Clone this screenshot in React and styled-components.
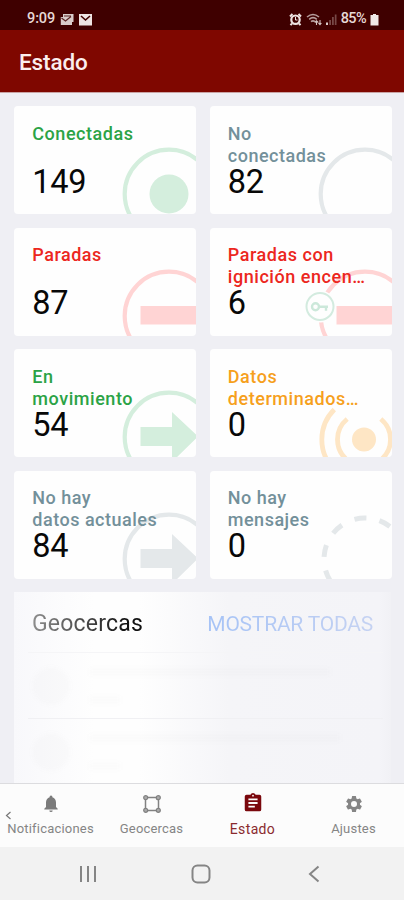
import React from "react";
import styled, { createGlobalStyle } from "styled-components";

const GlobalStyle = createGlobalStyle`
  * { box-sizing: border-box; }
  body { margin: 0; background: #efeff4; font-family: Roboto, "Liberation Sans", sans-serif; }
`;

const Screen = styled.div`
  width: 404px;
  height: 900px;
  display: flex;
  flex-direction: column;
  overflow: hidden;
  background: #efeff4;
`;

const StatusBar = styled.div`
  flex: none;
  height: 30px;
  display: flex;
  justify-content: space-between;
  padding: 8px 25px 0 27px;
  background: #3f0000;
  color: #e6d8d6;
`;

const StatusGroup = styled.div`
  display: flex;
  align-items: center;
  height: 22px;
  gap: ${(p) => p.$gap}px;
`;

const StatusText = styled.span`
  font-size: 14.5px;
  line-height: 22px;
  font-weight: 500;
  letter-spacing: ${(p) => p.$spacing || 0}px;
`;

const Header = styled.header`
  flex: none;
  height: 63px;
  display: flex;
  align-items: center;
  padding: 2px 19px 0;
  background: #7f0700;
  border-bottom: 1px solid #c9a3a4;
`;

const Title = styled.h1`
  margin: 0;
  color: #fbeeee;
  font-size: 22.5px;
  line-height: 28px;
  font-weight: 500;
  letter-spacing: -0.1px;
`;

const Content = styled.main`
  flex: 1;
  min-height: 0;
  padding: 13px 13px 0 14px;
  overflow: hidden;
`;

const Grid = styled.div`
  display: grid;
  grid-template-columns: 182px 182px;
  grid-auto-rows: 108px;
  gap: 13.5px;
`;

const Card = styled.section`
  position: relative;
  overflow: hidden;
  padding: 16.5px 0 0 18.3px;
  border-radius: 4px;
  background: #fefefe;
`;

const CardArt = styled.svg`
  position: absolute;
  inset: 0;
  color: ${(p) => p.$tone};
`;

const CardTitle = styled.div`
  position: relative;
  height: 44px;
  color: ${(p) => p.$color};
  font-size: 18px;
  line-height: 22px;
  font-weight: 480;
  letter-spacing: ${(p) => p.$spacing}px;
  white-space: pre;
`;

const CardValue = styled.div`
  position: relative;
  color: #080808;
  font-size: 32.5px;
  line-height: 30px;
  font-weight: 370;
  letter-spacing: -0.3px;
`;

const Geofences = styled.section`
  height: 191px;
  margin-top: 13.5px;
  background: linear-gradient(90deg, #f8f8fb 0, #fefefe 80px, #fefefe 125px, #f5f5f8 215px, #f4f4f8 365px, #f1f1f5 377px);
`;

const GeoHeader = styled.div`
  display: flex;
  align-items: center;
  justify-content: space-between;
  height: 60px;
  padding: 3px 18px 0 18px;
`;

const GeoTitle = styled.h2`
  margin: 0;
  font-size: 23px;
  font-weight: 370;
  letter-spacing: 0.2px;
  color: transparent;
  background: linear-gradient(90deg, #8e8e8e, #111 85%);
  background-clip: text;
`;

const ShowAll = styled.a`
  font-size: 21px;
  font-weight: 370;
  letter-spacing: -0.22px;
  color: transparent;
  background: linear-gradient(90deg, #a6c3f6, #c5d2f2);
  background-clip: text;
`;

const GeoRow = styled.div`
  display: flex;
  align-items: center;
  gap: 20px;
  height: 66px;
  margin: 0 8px 0 14px;
  padding-left: 4px;
  border-top: 1px solid ${(p) => p.$line};
`;

const Avatar = styled.div`
  width: 38px;
  height: 38px;
  border-radius: 50%;
  background: rgba(120, 120, 120, 0.025);
  filter: blur(2px);
`;

const Lines = styled.div`
  display: flex;
  flex-direction: column;
  gap: 20px;
`;

const Line = styled.div`
  width: ${(p) => p.$width}px;
  height: 8px;
  background: rgba(120, 120, 120, 0.02);
  filter: blur(2px);
`;

const TabBar = styled.nav`
  flex: none;
  position: relative;
  display: grid;
  grid-template-columns: repeat(4, 101px);
  height: 64px;
  background: #fcfcfc;
  border-top: 1px solid #dcdcdf;
`;

const Tab = styled.div`
  display: flex;
  flex-direction: column;
  align-items: center;
  padding-top: ${(p) => (p.$active ? 8 : 10)}px;
  color: ${(p) => (p.$active ? "#8a2a2e" : "#858585")};
`;

const TabLabel = styled.span`
  margin-top: 6px;
  font-size: ${(p) => p.$size || 13}px;
  line-height: 18px;
  letter-spacing: ${(p) => p.$spacing}px;
  white-space: nowrap;
`;

const ScrollHint = styled.svg`
  position: absolute;
  left: 4px;
  top: 26px;
`;

const SystemNav = styled.div`
  flex: none;
  display: grid;
  grid-template-columns: 175px 51px 175px;
  align-items: center;
  justify-items: center;
  height: 53px;
  background: #f2f2f2;
`;

const Ring = () => <circle cx="155" cy="88" r="44.3" fill="none" stroke="currentColor" strokeWidth="4.2" />;
const Arrow = () => <path d="M126.5 78h31.5v-15l26 24.5-26 25.5v-16h-31.5z" fill="currentColor" />;
const Bar = () => <path d="M126.5 78h60v18.5h-60z" fill="currentColor" />;

const art = {
  dot: <><Ring /><circle cx="155" cy="88" r="19.5" fill="currentColor" /></>,
  ring: <Ring />,
  bar: <><Ring /><Bar /></>,
  key: (
    <>
      <Ring /><Bar />
      <circle cx="110" cy="78.5" r="16" fill="#fefefe" />
      <circle cx="110" cy="78.5" r="13.5" fill="none" stroke="#d3ebdf" strokeWidth="2" />
      <g fill="none" stroke="#cce8da" strokeWidth="2.4">
        <circle cx="105.5" cy="78.8" r="3.5" />
        <path d="M109 78.8h9M116 78.8v4" />
      </g>
    </>
  ),
  arrow: <><Ring /><Arrow /></>,
  signal: (
    <g fill="none" stroke="currentColor" strokeWidth="4.8">
      <circle cx="154" cy="90.5" r="12" fill="currentColor" stroke="none" />
      <path d="M124.3 60.5A42.3 42.3 0 0 0 124.3 120.5M183.7 60.5A42.3 42.3 0 0 1 183.7 120.5" />
      <path d="M137.2 70A26.5 26.5 0 0 0 137.2 111M170.8 70A26.5 26.5 0 0 1 170.8 111" />
    </g>
  ),
  dashed: (
    <circle cx="155" cy="88" r="41" fill="none" stroke="currentColor" strokeWidth="5"
      strokeDasharray="12 13.76" transform="rotate(-69.4 155 88)" />
  ),
};

const cards = [
  { title: "Conectadas", value: 149, color: "#2ba346", tone: "#d4eedd", icon: "dot", spacing: 0.55 },
  { title: "No\nconectadas", value: 82, color: "#73909a", tone: "#e4e8ea", icon: "ring", spacing: 0.5 },
  { title: "Paradas", value: 87, color: "#ec2620", tone: "#ffd4d4", icon: "bar", spacing: 0.5 },
  { title: "Paradas con\nignición encen…", value: 6, color: "#ec2620", tone: "#ffd4d4", icon: "key", spacing: 0.55 },
  { title: "En\nmovimiento", value: 54, color: "#2ba346", tone: "#d4eedd", icon: "arrow", spacing: 0.55 },
  { title: "Datos\ndeterminados…", value: 0, color: "#f6a01c", tone: "#fee6c5", icon: "signal", spacing: 0.55 },
  { title: "No hay\ndatos actuales", value: 84, color: "#73909a", tone: "#e4e8ea", icon: "arrow", spacing: 0.5 },
  { title: "No hay\nmensajes", value: 0, color: "#73909a", tone: "#e4e8ea", icon: "dashed", spacing: 0.5 },
];

const MailStack = () => (
  <svg width="14" height="13" viewBox="0 0 14 13">
    <path d="M3 1h10.5v8H12v3H.8V4H3z" fill="#d9cccb" />
    <path d="M1.5 5l4 3 5.5-4.5M4 3h7" stroke="#5b2525" fill="none" strokeWidth="1.2" />
  </svg>
);
const Mail = () => (
  <svg width="13" height="13" viewBox="0 0 13 13">
    <path d="M0 1h13v11.5H0z" fill="#eee4e3" />
    <path d="M2 3l4.5 4L11 3" stroke="#3f0000" fill="none" strokeWidth="1.6" />
  </svg>
);
const Alarm = () => (
  <svg width="13" height="13" viewBox="0 0 13 13">
    <path d="M1 3.5L3.5 1M12 3.5L9.5 1M3 10.5l-1.5 1.7M10 10.5l1.5 1.7" stroke="#eee4e3" strokeWidth="2" />
    <circle cx="6.5" cy="6.7" r="4.2" fill="#3f0000" stroke="#eee4e3" strokeWidth="2.2" />
    <path d="M6.5 4v3h2" stroke="#eee4e3" fill="none" />
  </svg>
);
const Wifi = () => (
  <svg width="16" height="13" viewBox="0 0 16 13">
    <path d="M1 4q6-5 12 0M3.2 6.3q3.8-3.2 7.6 0M5 8.7q2-1.7 4 0" fill="none" stroke="#b69d9c" strokeWidth="1.6" />
    <path d="M10.5 12V8M8.8 9.5l1.7-1.8 1.7 1.8M14 7v4.5M12.5 10l1.5 1.6 1.4-1.6" fill="none" stroke="#d4c4c3" strokeWidth="1.1" />
  </svg>
);
const Signal = () => (
  <svg width="11" height="13" viewBox="0 0 11 13">
    <path d="M0 12V9.5h2V12z" fill="#d9cccb" />
    <path d="M3.2 12V7h1.8v5zM6 12V4h1.8v8zM8.8 12V1.5h1.7V12z" fill="#774847" />
  </svg>
);
const Battery = () => (
  <svg width="9" height="13" viewBox="0 0 9 13">
    <path d="M3 1h3v1h2.5v10.5h-8V2H3z" fill="#f1e8e7" />
  </svg>
);

const Bell = () => (
  <svg width="18" height="20" viewBox="0 0 18 20">
    <path d="M9 1.5a1.5 1.5 0 0 0-1.4 1.7C5.3 3.9 4 5.9 4 8.4V13l-1.7 1.7v.8h13.4v-.8L14 13V8.4c0-2.5-1.3-4.5-3.6-5.2A1.5 1.5 0 0 0 9 1.5zM7.3 16.4a1.7 1.5 0 0 0 3.4 0z" fill="#7b7b7b" />
  </svg>
);
const Fence = () => (
  <svg width="20" height="20" viewBox="0 0 20 20" fill="none" stroke="#818181" strokeWidth="1.5">
    <path d="M3.5 3.5h13v13h-13z" />
    <g fill="#aaa" strokeWidth="1.2">
      <circle cx="3.7" cy="3.7" r="2" /><circle cx="16.3" cy="3.7" r="2" />
      <circle cx="3.7" cy="16.3" r="2" /><circle cx="16.3" cy="16.3" r="2" />
    </g>
  </svg>
);
const Clipboard = () => (
  <svg width="22" height="22" viewBox="0 0 24 24">
    <path d="M19 3h-4.2a3 3 0 0 0-5.6 0H5a2 2 0 0 0-2 2v14a2 2 0 0 0 2 2h14a2 2 0 0 0 2-2V5a2 2 0 0 0-2-2zm-7 0a1 1 0 1 1 0 2 1 1 0 0 1 0-2zm2 14H7v-2h7v2zm3-4H7v-2h10v2zm0-4H7V7h10v2z" fill="#7a080d" />
  </svg>
);
const Gear = () => (
  <svg width="20" height="20" viewBox="0 0 24 24">
    <path d="M19.14 12.94c.04-.3.06-.61.06-.94s-.02-.64-.07-.94l2.03-1.58a.5.5 0 0 0 .12-.61l-1.92-3.32a.5.5 0 0 0-.59-.22l-2.39.96a7 7 0 0 0-1.62-.94l-.36-2.54a.5.5 0 0 0-.48-.41h-3.84a.5.5 0 0 0-.47.41l-.36 2.54a7 7 0 0 0-1.62.94l-2.39-.96a.5.5 0 0 0-.59.22L2.74 8.87a.5.5 0 0 0 .12.61l2.03 1.58a6 6 0 0 0 0 1.88l-2.03 1.58a.5.5 0 0 0-.12.61l1.92 3.32c.12.22.37.29.59.22l2.39-.96c.5.38 1.03.7 1.62.94l.36 2.54c.05.24.24.41.48.41h3.84c.24 0 .44-.17.47-.41l.36-2.54a7 7 0 0 0 1.62-.94l2.39.96c.22.08.47 0 .59-.22l1.92-3.32a.5.5 0 0 0-.12-.61zM12 15.6a3.6 3.6 0 1 1 0-7.2 3.6 3.6 0 0 1 0 7.2z" fill="#858585" />
  </svg>
);

const tabs = [
  { label: "Notificaciones", icon: <Bell />, spacing: 0.2 },
  { label: "Geocercas", icon: <Fence />, spacing: 0.2 },
  { label: "Estado", icon: <Clipboard />, active: true, size: 14, spacing: 0.35 },
  { label: "Ajustes", icon: <Gear />, spacing: 0.2 },
];

export default function App() {
  return (
    <Screen>
      <GlobalStyle />
      <StatusBar>
        <StatusGroup $gap={5}>
          <StatusText $spacing={-0.1}>9:09</StatusText>
          <MailStack />
          <Mail />
        </StatusGroup>
        <StatusGroup $gap={4}>
          <Alarm />
          <Wifi />
          <Signal />
          <StatusText $spacing={-0.6}>85%</StatusText>
          <Battery />
        </StatusGroup>
      </StatusBar>
      <Header><Title>Estado</Title></Header>
      <Content>
        <Grid>
          {cards.map((c) => (
            <Card key={c.title}>
              <CardArt $tone={c.tone} width="182" height="108" viewBox="0 0 182 108">{art[c.icon]}</CardArt>
              <CardTitle $color={c.color} $spacing={c.spacing}>{c.title}</CardTitle>
              <CardValue>{c.value}</CardValue>
            </Card>
          ))}
        </Grid>
        <Geofences>
          <GeoHeader>
            <GeoTitle>Geocercas</GeoTitle>
            <ShowAll>MOSTRAR TODAS</ShowAll>
          </GeoHeader>
          <GeoRow $line="#f5f5f7">
            <Avatar />
            <Lines><Line $width={240} /><Line $width={30} /></Lines>
          </GeoRow>
          <GeoRow $line="#f0f0f3">
            <Avatar />
            <Lines><Line $width={250} /><Line $width={30} /></Lines>
          </GeoRow>
        </Geofences>
      </Content>
      <TabBar>
        <ScrollHint width="8" height="11" viewBox="0 0 8 11">
          <path d="M6.5 2L2.5 5.5l4 3.5" fill="none" stroke="#777" strokeWidth="1.2" />
        </ScrollHint>
        {tabs.map((t) => (
          <Tab key={t.label} $active={t.active}>
            {t.icon}
            <TabLabel $size={t.size} $spacing={t.spacing}>{t.label}</TabLabel>
          </Tab>
        ))}
      </TabBar>
      <SystemNav>
        <svg width="18" height="18" viewBox="0 0 18 18">
          <path d="M2 1v16M9 1v16M16 1v16" stroke="#858585" strokeWidth="2" />
        </svg>
        <svg width="20" height="20" viewBox="0 0 20 20">
          <rect x="1.5" y="1.5" width="17" height="17" rx="5" fill="none" stroke="#858585" strokeWidth="2" />
        </svg>
        <svg width="12" height="18" viewBox="0 0 12 18">
          <path d="M10.5 1.5L2 9l8.5 7.5" fill="none" stroke="#858585" strokeWidth="2" />
        </svg>
      </SystemNav>
    </Screen>
  );
}
